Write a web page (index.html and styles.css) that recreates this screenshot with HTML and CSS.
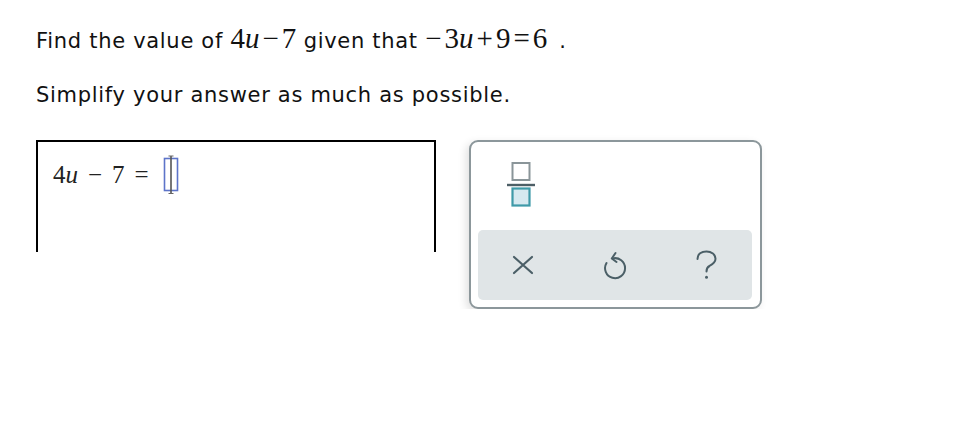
FILE: index.html
```html
<!DOCTYPE html>
<html>
<head>
<meta charset="utf-8">
<link rel="stylesheet" href="styles.css">
</head>
<body>
<div class="page">
  <p class="line first">Find the value of <span class="m">4<i>u</i><span class="op">−</span>7</span> given that <span class="m"><span class="op l">−</span>3<i>u</i><span class="op">+</span>9<span class="op">=</span>6</span><span class="dot">.</span></p>
  <p class="line second">Simplify your answer as much as possible.</p>
  <div class="work">
    <div class="answer">
      <div class="expr"><span>4<i>u</i></span><span class="sp">−</span><span>7</span><span class="sp">=</span>
        <svg class="cursor" width="16" height="40" viewBox="0 0 16 40">
          <rect x="1.5" y="3.5" width="13" height="32" fill="#fff" stroke="#5d74c9" stroke-width="1.6"/>
          <line x1="8" y1="1" x2="8" y2="38.5" stroke="#555" stroke-width="1.6"/>
          <line x1="5.5" y1="1" x2="10.5" y2="1" stroke="#666" stroke-width="1"/>
          <line x1="5.5" y1="38.5" x2="10.5" y2="38.5" stroke="#666" stroke-width="1"/>
        </svg>
      </div>
    </div>
    <div class="palette">
      <div class="tools">
        <button class="frac" aria-label="fraction">
          <svg width="28" height="46" viewBox="0 0 28 46">
            <rect x="5.5" y="1" width="17" height="17" fill="#fff" stroke="#8a9599" stroke-width="2"/>
            <line x1="0" y1="23" x2="28" y2="23" stroke="#4d5f66" stroke-width="2.4"/>
            <rect x="5.5" y="26.5" width="17" height="17" fill="#d6e9f0" stroke="#3f9aa8" stroke-width="2.2"/>
          </svg>
        </button>
      </div>
      <div class="bar">
        <button class="act" aria-label="clear">
          <svg width="30" height="30" viewBox="0 0 30 30">
            <path d="M6 7 L24 23 M24 7 L6 23" stroke="#4b5f67" stroke-width="2.2" fill="none" stroke-linecap="round"/>
          </svg>
        </button>
        <button class="act" aria-label="undo">
          <svg width="30" height="30" viewBox="0 0 30 30">
            <path d="M12.5 8.5 A10 10 0 1 1 6.5 13" stroke="#4b5f67" stroke-width="2" fill="none" stroke-linecap="round"/>
            <path d="M15.5 3 L11.8 8.5 L16.5 12" stroke="#4b5f67" stroke-width="2" fill="none" stroke-linecap="round" stroke-linejoin="round"/>
          </svg>
        </button>
        <button class="act" aria-label="help">
          <svg width="30" height="30" viewBox="0 0 30 30">
            <path d="M5.5 9 C5.5 4 9.5 1.5 14.5 1.5 C19.5 1.5 23.5 4.5 23.5 8.8 C23.5 12.8 20.3 14.5 17.5 16 C15.3 17.2 14.5 18.7 14.5 21.5" stroke="#4b5f67" stroke-width="2" fill="none" stroke-linecap="round"/>
            <circle cx="14.5" cy="27.3" r="1.5" fill="#4b5f67"/>
          </svg>
        </button>
      </div>
    </div>
  </div>
</div>
</body>
</html>
```

FILE: styles.css
```css
html, body {
  margin: 0;
  padding: 0;
  background: #fff;
}
body {
  font-family: "DejaVu Sans", Verdana, sans-serif;
  font-size: 21px;
  letter-spacing: 0.7px;
  color: #111;
}
.page {
  padding: 26px 0 0 36px;
}
.line {
  margin: 0;
  line-height: 30px;
  white-space: nowrap;
}
.second {
  margin-top: 24px;
}
.m {
  font-family: "Liberation Serif", "Times New Roman", serif;
  font-size: 29px;
  line-height: 20px;
  letter-spacing: 0;
}
.m i {
  font-style: italic;
}
.op {
  margin: 0 3px;
}
.op.l {
  margin-left: 0;
}
.dot {
  margin-left: 12px;
}
.work {
  display: flex;
  align-items: flex-start;
  margin-top: 30px;
  gap: 33px;
}
.answer {
  width: 396px;
  height: 110px;
  border: 2px solid #000;
  border-bottom: none;
  letter-spacing: 0;
}
.expr {
  display: flex;
  align-items: center;
  padding: 13px 0 0 15px;
  font-family: "Liberation Serif", "Times New Roman", serif;
  font-size: 25px;
  color: #222;
  height: 40px;
}
.expr i {
  font-style: italic;
}
.sp {
  margin: 0 10px;
}
.cursor {
  margin-left: 4px;
  display: block;
}
.palette {
  width: 293px;
  height: 169px;
  border: 2px solid #8c979b;
  border-radius: 9px;
  box-shadow: -3px 3px 8px rgba(0, 0, 0, 0.12);
  background: #fff;
  display: flex;
  flex-direction: column;
  padding: 0 8px 7px 7px;
  box-sizing: border-box;
}
.tools {
  display: flex;
  align-items: flex-start;
  padding: 20px 0 0 29px;
  height: 88px;
  flex: none;
  box-sizing: border-box;
}
button {
  border: none;
  background: none;
  padding: 0;
  margin: 0;
  cursor: pointer;
}
.frac svg {
  display: block;
}
.bar {
  flex: 1;
  background: #e0e5e7;
  border-radius: 5px;
  display: flex;
  align-items: center;
  gap: 62px;
  padding: 0 0 0 30px;
}
.act svg {
  display: block;
}
```
